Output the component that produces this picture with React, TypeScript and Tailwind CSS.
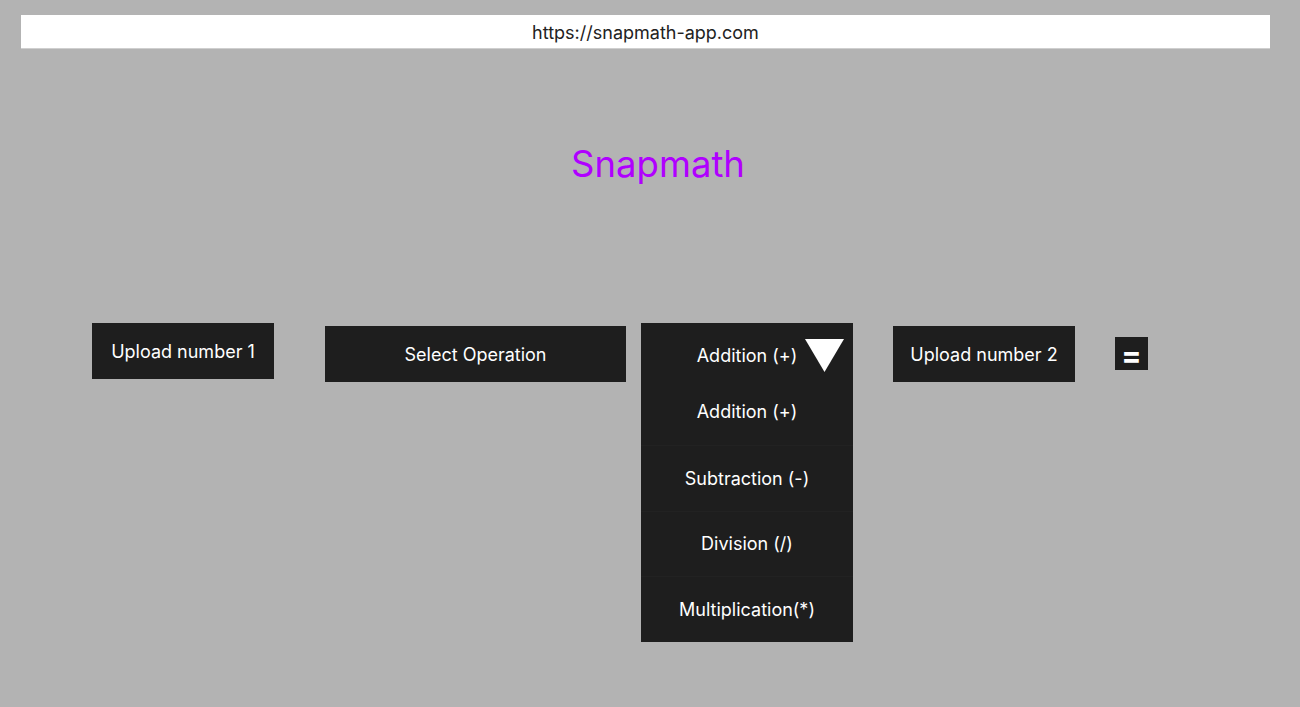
import React from "react";

const font = { fontFamily: "Inter, 'Noto Sans', sans-serif" };

export default function App() {
  const items = ["Addition (+)", "Subtraction (-)", "Division (/)", "Multiplication(*)"];
  return (
    <div className="min-h-[707px] w-full bg-[#b3b3b3] pt-[15px]" style={font}>
      <div className="ml-[21px] flex h-[34px] w-[1249px] items-center justify-center border-b border-[#cfcfcf] bg-white pt-[2px] text-[18px] text-[#222]">
        https://snapmath-app.com
      </div>
      <div className="mt-[93px] flex justify-center pl-[16px] text-[36.5px] leading-[44px] text-[#b000ff]">
        Snapmath
      </div>
      <div className="mt-[137px] flex items-start pl-[92px] text-[18px] text-white">
        <div className="flex h-[56px] w-[182px] items-center justify-center bg-[#1e1e1e]">Upload number 1</div>
        <div className="ml-[51px] mt-[3px] flex h-[56px] w-[301px] items-center justify-center bg-[#1e1e1e]">
          Select Operation
        </div>
        <div className="ml-[15px] flex w-[212px] flex-col bg-[#1e1e1e]">
          <div className="relative flex h-[56px] items-center justify-center pt-[8px]">
            Addition (+)
            <svg className="absolute left-[164px] top-[16px]" width="39" height="33" viewBox="0 0 39 33">
              <polygon points="0,0 39,0 19.5,33" fill="#ffffff" />
            </svg>
          </div>
          {items.map((t, i) => (
            <div
              key={t}
              className={`flex h-[65.75px] items-center justify-center ${i > 0 ? "border-t border-[#222222]" : ""}`}
            >
              {t}
            </div>
          ))}
        </div>
        <div className="ml-[40px] mt-[3px] flex h-[56px] w-[182px] items-center justify-center bg-[#1e1e1e]">
          Upload number 2
        </div>
        <div className="ml-[40px] mt-[14px] flex h-[33px] w-[33px] items-center justify-center bg-[#1e1e1e] pt-[3px] text-[30px] font-bold leading-none">
          =
        </div>
      </div>
    </div>
  );
}
